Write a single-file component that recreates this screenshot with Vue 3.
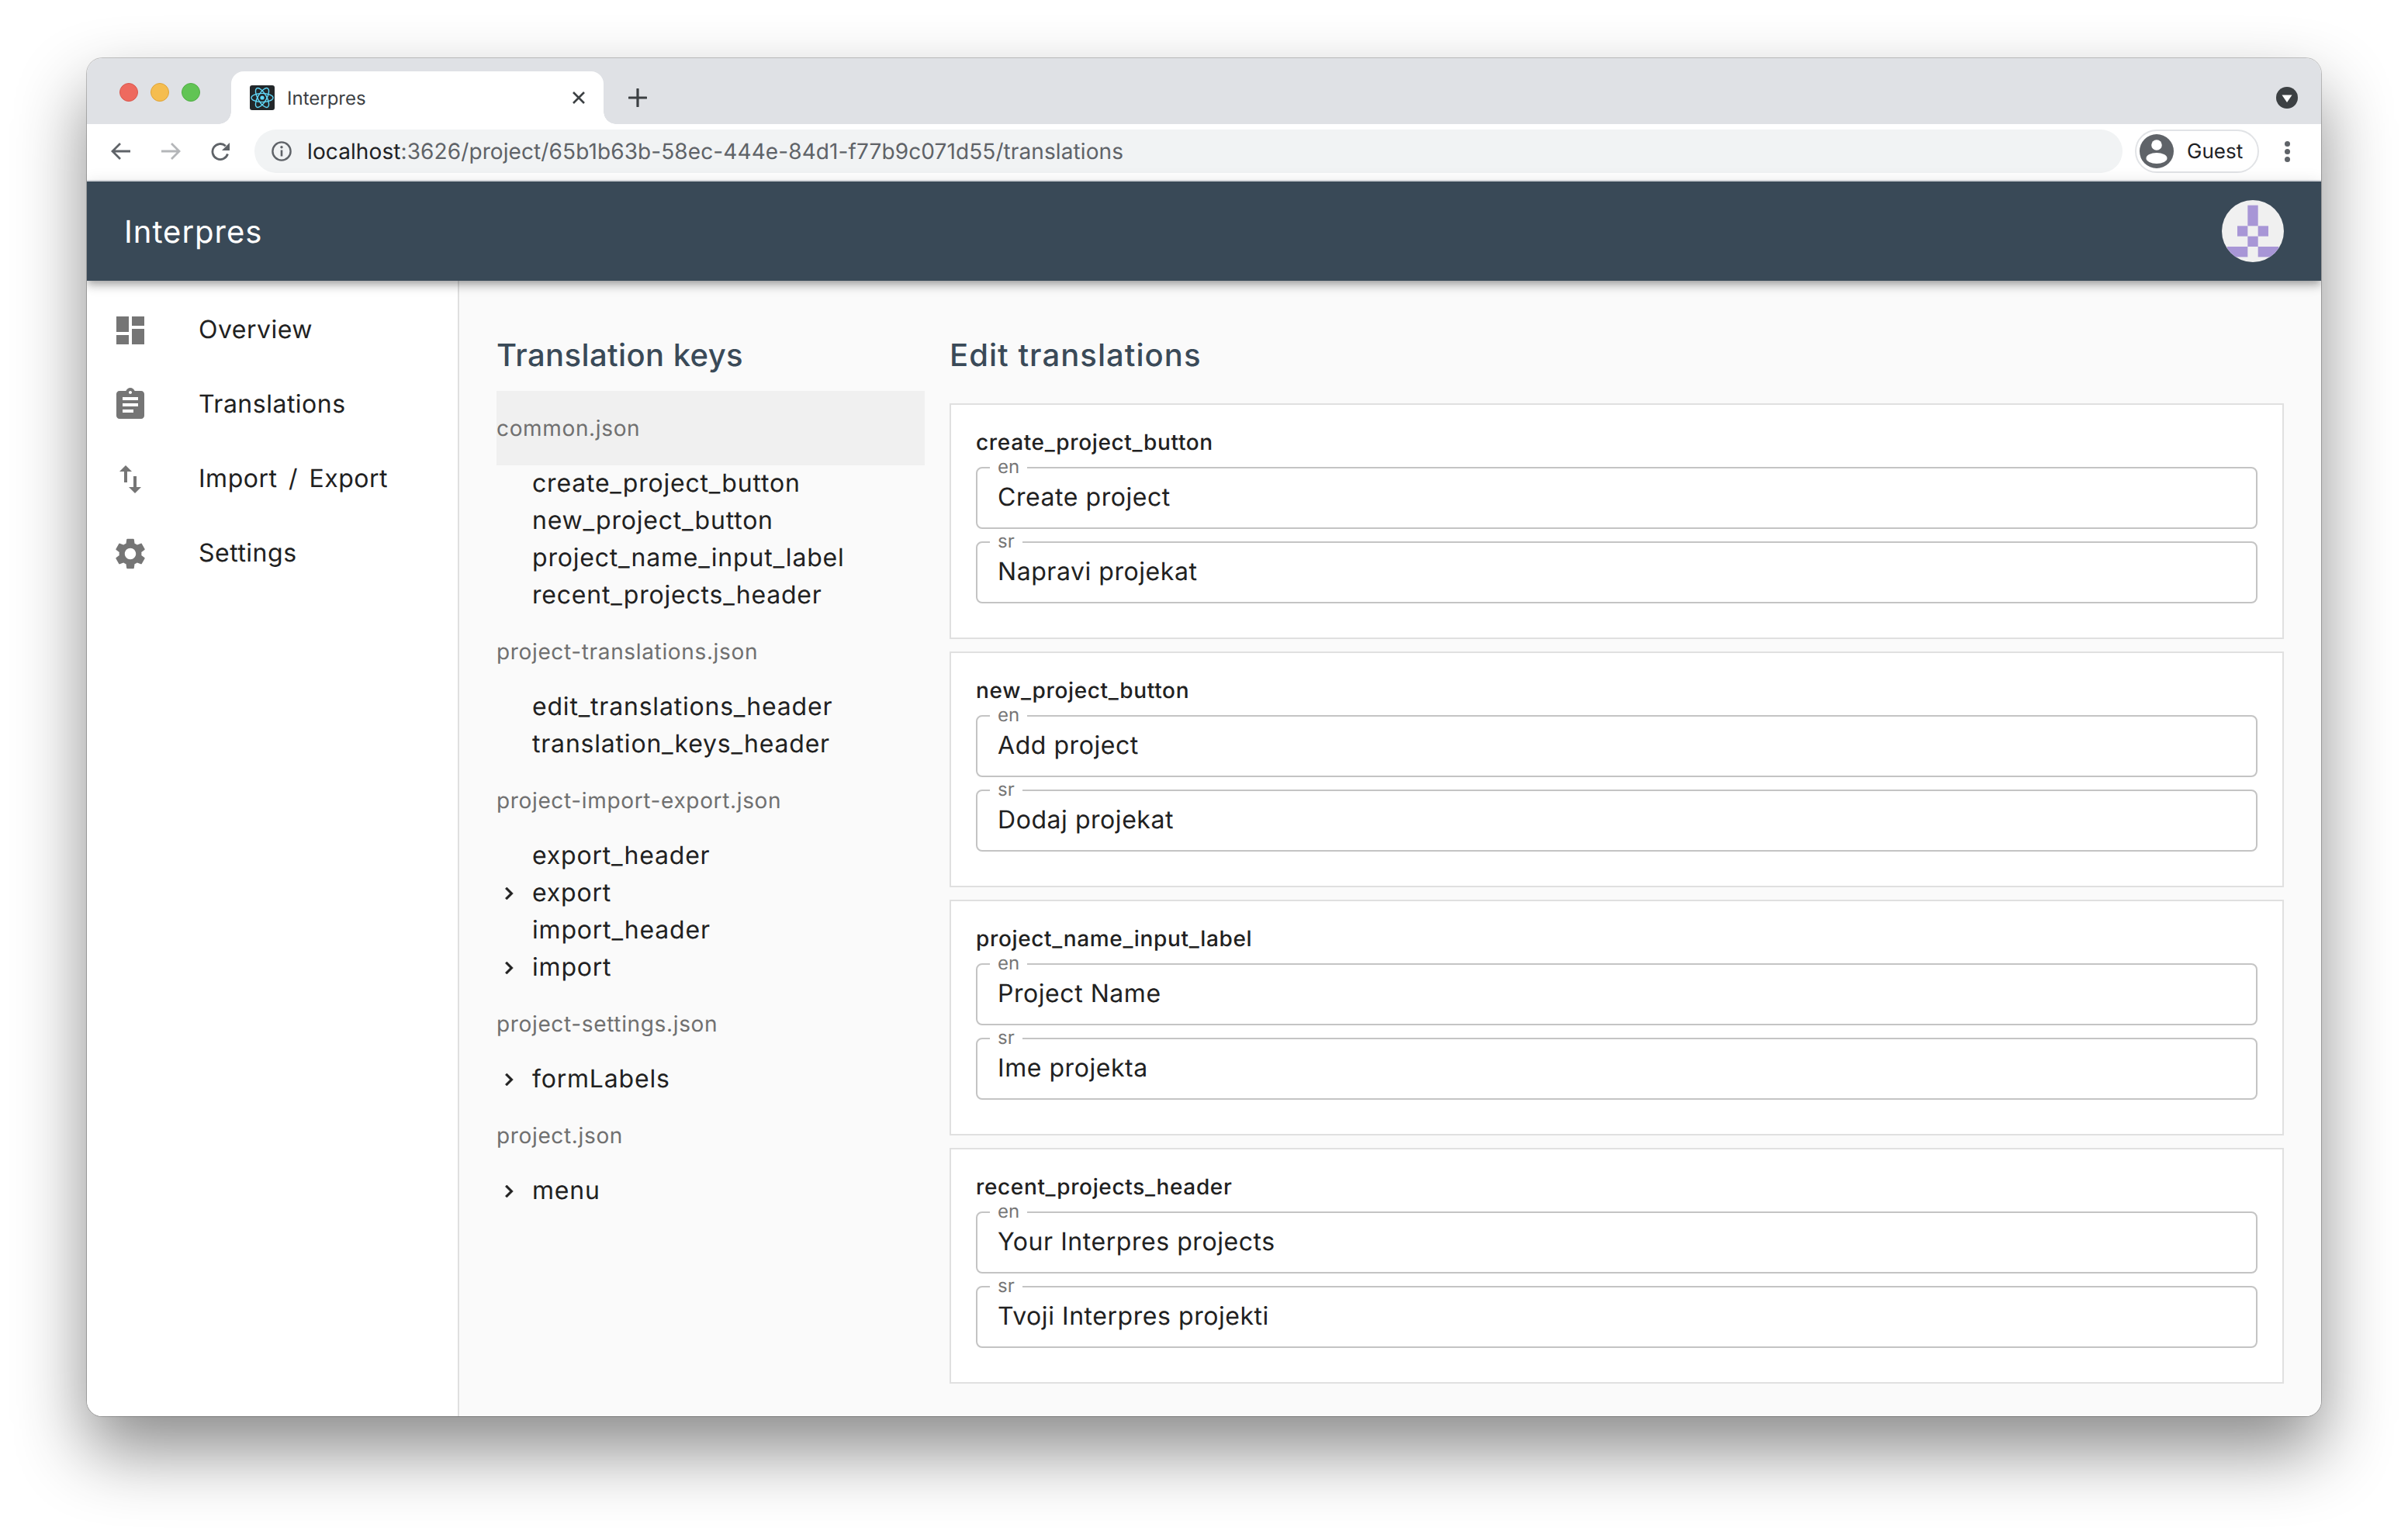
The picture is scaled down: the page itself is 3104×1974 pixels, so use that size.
<script setup>
const nav = [
  { label: 'Overview', d: 'M3 13h8V3H3v10zm0 8h8v-6H3v6zm10 0h8V11h-8v10zm0-18v6h8V3h-8z' },
  { label: 'Translations', d: 'M19 3h-4.18C14.4 1.84 13.3 1 12 1c-1.3 0-2.4.84-2.82 2H5c-1.1 0-2 .9-2 2v14c0 1.1.9 2 2 2h14c1.1 0 2-.9 2-2V5c0-1.1-.9-2-2-2zm-7 0c.55 0 1 .45 1 1s-.45 1-1 1-1-.45-1-1 .45-1 1-1zm2 14H7v-2h7v2zm3-4H7v-2h10v2zm0-4H7V7h10v2z' },
  { label: 'Import / Export', d: 'M9 3L5 6.99h3V14h2V6.99h3L9 3zm7 14.01V10h-2v7.01h-3L15 21l4-3.99h-3z' },
  { label: 'Settings', d: 'M19.14 12.94c.04-.3.06-.61.06-.94 0-.32-.02-.64-.07-.94l2.03-1.58c.18-.14.23-.41.12-.61l-1.92-3.32c-.12-.22-.37-.29-.59-.22l-2.39.96c-.5-.38-1.03-.7-1.62-.94l-.36-2.54c-.04-.24-.24-.41-.48-.41h-3.84c-.24 0-.43.17-.47.41l-.36 2.54c-.59.24-1.13.57-1.62.94l-2.39-.96c-.22-.08-.47 0-.59.22L2.74 8.87c-.12.21-.08.47.12.61l2.03 1.58c-.05.3-.09.63-.09.94s.02.64.07.94l-2.03 1.58c-.18.14-.23.41-.12.61l1.92 3.32c.12.22.37.29.59.22l2.39-.96c.5.38 1.03.7 1.62.94l.36 2.54c.05.24.24.41.48.41h3.84c.24 0 .44-.17.47-.41l.36-2.54c.59-.24 1.13-.56 1.62-.94l2.39.96c.22.08.47 0 .59-.22l1.92-3.32c.12-.22.07-.47-.12-.61l-2.01-1.58zM12 15.6c-1.98 0-3.6-1.62-3.6-3.6s1.62-3.6 3.6-3.6 3.6 1.62 3.6 3.6-1.62 3.6-3.6 3.6z' }
]
const groups = [
  { name: 'common.json', active: true, items: [
    { t: 'create_project_button' }, { t: 'new_project_button' }, { t: 'project_name_input_label' }, { t: 'recent_projects_header' } ] },
  { name: 'project-translations.json', items: [ { t: 'edit_translations_header' }, { t: 'translation_keys_header' } ] },
  { name: 'project-import-export.json', items: [
    { t: 'export_header' }, { t: 'export', more: true }, { t: 'import_header' }, { t: 'import', more: true } ] },
  { name: 'project-settings.json', items: [ { t: 'formLabels', more: true } ] },
  { name: 'project.json', items: [ { t: 'menu', more: true } ] }
]
const cards = [
  { key: 'create_project_button', en: 'Create project', sr: 'Napravi projekat' },
  { key: 'new_project_button', en: 'Add project', sr: 'Dodaj projekat' },
  { key: 'project_name_input_label', en: 'Project Name', sr: 'Ime projekta' },
  { key: 'recent_projects_header', en: 'Your Interpres projects', sr: 'Tvoji Interpres projekti' }
]
</script>

<template>
  <div class="page">
    <div class="window">
      <div class="tabstrip">
        <div class="lights"><i class="l red"></i><i class="l yellow"></i><i class="l green"></i></div>
        <div class="tab">
          <svg class="favicon" viewBox="0 0 32 32">
            <rect width="32" height="32" rx="3" fill="#23272a"/>
            <g fill="none" stroke="#61dafb" stroke-width="1.4">
              <ellipse cx="16" cy="16" rx="14" ry="5.6"/>
              <ellipse cx="16" cy="16" rx="14" ry="5.6" transform="rotate(60 16 16)"/>
              <ellipse cx="16" cy="16" rx="14" ry="5.6" transform="rotate(120 16 16)"/>
            </g>
            <circle cx="16" cy="16" r="2.6" fill="#61dafb"/>
          </svg>
          <span class="tab-title">Interpres</span>
          <svg class="close" viewBox="0 0 18 16"><path d="M2 1l14 14M16 1L2 15" stroke="#3c4043" stroke-width="2.6" fill="none"/></svg>
        </div>
        <svg class="plus" viewBox="0 0 24 24"><path d="M12 1v22M1 12h22" stroke="#3c4043" stroke-width="3.2" stroke-linecap="round" fill="none"/></svg>
        <svg class="drop" viewBox="0 0 28 28"><circle cx="14" cy="14" r="14" fill="#3c4043"/><path d="M7.5 10.5h13L14 20z" fill="#fff"/></svg>
      </div>

      <div class="toolbar">
        <svg class="tool" viewBox="0 0 28 24"><path d="M26 12H3M13 2L3 12l10 10" fill="none" stroke="#5f6368" stroke-width="2.8"/></svg>
        <svg class="tool" viewBox="0 0 28 24"><path d="M2 12h23M15 2l10 10-10 10" fill="none" stroke="#b4b6b9" stroke-width="2.8"/></svg>
        <svg class="tool" viewBox="0 0 28 24"><path d="M23.5 15.5A10 10 0 1 1 20.8 5.2" fill="none" stroke="#5f6368" stroke-width="2.8"/><path d="M26 1v10H16z" fill="#5f6368"/></svg>
        <div class="omnibox">
          <svg class="info" viewBox="0 0 26 26"><circle cx="13" cy="13" r="11.6" fill="none" stroke="#5f6368" stroke-width="2.4"/><path d="M13 11.5v8" stroke="#5f6368" stroke-width="2.6"/><circle cx="13" cy="7.8" r="1.7" fill="#5f6368"/></svg>
          <span class="url"><b>localhost</b>:3626/project/65b1b63b-58ec-444e-84d1-f77b9c071d55/translations</span>
        </div>
        <div class="guest">
          <svg class="guest-ico" viewBox="0 0 44 44">
            <circle cx="22" cy="22" r="22" fill="#5f6368"/>
            <circle cx="22" cy="14" r="6.8" fill="#fff"/>
            <ellipse cx="22" cy="31" rx="13.5" ry="7" fill="#fff"/>
          </svg>
          <span>Guest</span>
        </div>
        <div class="kebab"><i></i><i></i><i></i></div>
      </div>

      <header class="appbar">
        <span class="brand">Interpres</span>
        <svg class="identicon" viewBox="0 0 6 6">
          <circle cx="3" cy="3" r="3" fill="#f0f0f0"/>
          <clipPath id="idclip"><circle cx="3" cy="3" r="3"/></clipPath>
          <g fill="#a896d6" clip-path="url(#idclip)">
            <rect x="2.5" y=".5" width="1" height="2"/>
            <rect x="1.5" y="2.5" width="1" height="1"/>
            <rect x="3.5" y="2.5" width="1" height="1"/>
            <rect x="2.5" y="3.5" width="1" height="1"/>
            <rect x=".5" y="4.5" width="2" height="1"/>
            <rect x="3.5" y="4.5" width="2" height="1"/>
          </g>
        </svg>
      </header>

      <div class="body">
        <aside class="sidebar">
          <div v-for="n in nav" :key="n.label" class="nav-item">
            <svg class="nav-ico" viewBox="0 0 24 24"><path :d="n.d" fill="#757575"/></svg>
            <span class="nav-text">{{ n.label }}</span>
          </div>
        </aside>
        <main class="main">
          <section>
            <h2 class="title keys">Translation keys</h2>
            <div v-for="g in groups" :key="g.name">
              <div class="group" :class="{ active: g.active }">{{ g.name }}</div>
              <div v-for="it in g.items" :key="it.t" class="leaf">
                <span class="chev">
                  <svg v-if="it.more" viewBox="0 0 24 24"><path d="M10 6L8.59 7.41 13.17 12l-4.58 4.59L10 18l6-6z" fill="#212121" stroke="#212121" stroke-width=".5"/></svg>
                </span>
                <span class="leaf-text">{{ it.t }}</span>
              </div>
            </div>
          </section>
          <section>
            <h2 class="title edit">Edit translations</h2>
            <div class="cards">
              <div v-for="c in cards" :key="c.key" class="card">
                <div class="key">{{ c.key }}</div>
                <div class="fields">
                  <div class="field"><label>en</label><span class="value">{{ c.en }}</span></div>
                  <div class="field"><label>sr</label><span class="value">{{ c.sr }}</span></div>
                </div>
              </div>
            </div>
          </section>
        </main>
      </div>
    </div>
  </div>
</template>

<style>
html, body { margin: 0; background: #fff; }
</style>

<style scoped>
.page {
  box-sizing: border-box;
  width: 3104px;
  height: 1974px;
  padding: 75px 112px 148px;
  background: #fff;
  overflow: hidden;
  font-family: Inter, "Liberation Sans", sans-serif;
  text-rendering: geometricPrecision;
}
.window {
  height: 100%;
  display: flex;
  flex-direction: column;
  border-radius: 20px;
  overflow: hidden;
  background: #fff;
  box-shadow: 0 0 0 1px rgba(0,0,0,.22), 0 44px 90px rgba(0,0,0,.46);
}
.tabstrip {
  height: 85px;
  flex: none;
  display: flex;
  align-items: flex-end;
  background: #dfe1e5;
  padding-left: 42px;
}
.lights { display: flex; gap: 16px; align-self: flex-start; margin-top: 32px; width: 144px; }
.l { width: 24px; height: 24px; border-radius: 50%; box-sizing: border-box; }
.red { background: #ee6a5f; border: 1px solid #d9584e; }
.yellow { background: #f5bd4f; border: 1px solid #dfa43a; }
.green { background: #61c454; border: 1px solid #52ae46; }
.tab {
  position: relative;
  width: 480px;
  height: 68px;
  box-sizing: border-box;
  padding: 0 24px;
  display: flex;
  align-items: center;
  background: #fff;
  border-radius: 16px 16px 0 0;
}
.tab::before, .tab::after {
  content: "";
  position: absolute;
  bottom: 0;
  width: 16px;
  height: 16px;
}
.tab::before { left: -16px; background: radial-gradient(circle at 0 0, transparent 15.5px, #fff 16px); }
.tab::after { right: -16px; background: radial-gradient(circle at 100% 0, transparent 15.5px, #fff 16px); }
.favicon { width: 32px; height: 32px; flex: none; }
.tab-title { margin-left: 16px; font-size: 24px; color: #3c4043; flex: 1; }
.close { width: 18px; height: 16px; margin-right: -1px; }
.plus { width: 24px; height: 24px; margin: 0 0 22px 32px; }
.drop { width: 28px; height: 28px; margin: 0 30px 20px auto; }

.toolbar {
  height: 74px;
  flex: none;
  box-sizing: border-box;
  display: flex;
  align-items: center;
  padding: 0 0 2px 30px;
  background: #fff;
  border-bottom: 2px solid #dee1e6;
}
.tool { width: 28px; height: 24px; margin-right: 36px; flex: none; }
.tool:nth-child(3) { margin-right: 30px; }
.omnibox {
  width: 2408px;
  height: 56px;
  flex: none;
  box-sizing: border-box;
  padding-left: 22px;
  display: flex;
  align-items: center;
  border-radius: 28px;
  background: #f1f3f4;
}
.info { width: 26px; height: 26px; flex: none; }
.url { margin-left: 20px; font-size: 28px; letter-spacing: .1px; color: #5f6368; white-space: nowrap; }
.url b { font-weight: 400; color: #202124; }
.guest {
  width: 160px;
  height: 56px;
  flex: none;
  box-sizing: border-box;
  margin-left: 16px;
  padding-left: 4px;
  display: flex;
  align-items: center;
  gap: 17px;
  border: 2px solid #e1e3e6;
  border-radius: 28px;
  font-size: 26px;
  color: #202124;
}
.guest-ico { width: 44px; height: 44px; }
.kebab { display: flex; flex-direction: column; gap: 3px; margin-left: 33px; }
.kebab i { width: 7px; height: 7px; border-radius: 50%; background: #5f6368; }

.appbar {
  position: relative;
  z-index: 2;
  height: 128px;
  flex: none;
  box-sizing: border-box;
  padding: 0 48px 0 48px;
  display: flex;
  align-items: center;
  justify-content: space-between;
  background: #394957;
  box-shadow: 0 4px 8px -2px rgba(0,0,0,.2), 0 8px 10px rgba(0,0,0,.14), 0 2px 20px rgba(0,0,0,.12);
}
.brand { font-size: 40px; letter-spacing: 1px; color: #fff; }
.identicon { width: 80px; height: 80px; }

.body { flex: 1; display: flex; min-height: 0; }
.sidebar {
  width: 480px;
  flex: none;
  box-sizing: border-box;
  padding-top: 16px;
  background: #fff;
  border-right: 2px solid #e0e0e0;
}
.nav-item { height: 96px; display: flex; align-items: center; padding-left: 32px; font-size: 32px; color: #212121; }
.nav-text { letter-spacing: .5px; word-spacing: 5px; margin-top: -4px; }
.nav-ico { width: 48px; height: 48px; margin-right: 64px; flex: none; }
.main {
  flex: 1;
  min-width: 0;
  display: grid;
  grid-template-columns: 552px 1fr;
  column-gap: 32px;
  align-items: start;
  padding: 48px 48px 0;
  background: #fafafa;
}
.title { margin: 0; height: 94px; font-size: 40px; line-height: 96px; font-weight: 500; color: #3a4a58; }
.title.keys { letter-spacing: .4px; }
.title.edit { letter-spacing: 1.05px; }
.group { height: 96px; display: flex; align-items: center; font-size: 28px; letter-spacing: .65px; color: #707070; }
.group.active { background: #f0f0f0; }
.leaf { height: 48px; display: flex; align-items: center; font-size: 32px; color: #212121; }
.leaf-text { letter-spacing: .8px; margin-top: -4px; }
.chev { width: 32px; height: 32px; margin-right: 14px; flex: none; }
.chev svg { display: block; width: 32px; height: 32px; overflow: visible; }
.cards { display: flex; flex-direction: column; gap: 16px; margin-top: 16px; }
.card {
  box-sizing: border-box;
  height: 304px;
  padding: 32px 32px 0;
  background: #fff;
  border: 2px solid #e0e0e0;
}
.key { height: 36px; font-size: 28px; line-height: 32px; font-weight: 500; letter-spacing: .65px; color: #212121; margin-bottom: 12px; }
.fields { display: flex; flex-direction: column; gap: 16px; }
.field {
  position: relative;
  height: 80px;
  box-sizing: border-box;
  padding-left: 26px;
  display: flex;
  align-items: center;
  border: 2px solid #c4c4c4;
  border-radius: 8px;
  font-size: 32px;
  color: #212121;
}
.value { letter-spacing: .55px; margin-top: -4px; }
.field label {
  position: absolute;
  left: 16px;
  top: -14px;
  padding: 0 10px;
  background: #fff;
  font-size: 24px;
  line-height: 24px;
  color: #757575;
}
</style>
